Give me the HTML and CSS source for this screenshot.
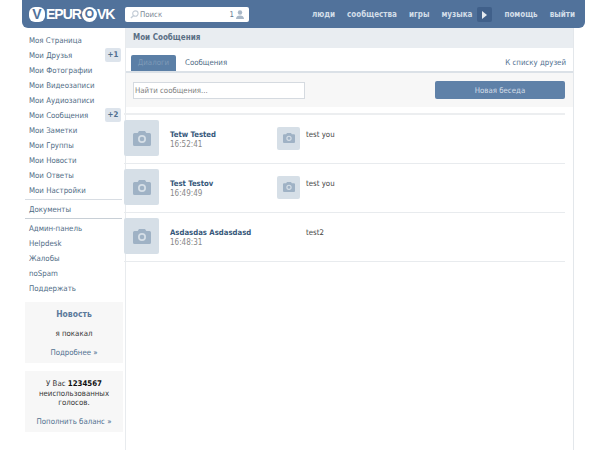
FILE: index.html
```html
<!DOCTYPE html>
<html lang="ru">
<head>
    <meta charset="UTF-8">
    <meta name="viewport" content="width=device-width, initial-scale=1.0">
    <title>Мои Сообщения</title>
    <link rel="stylesheet" href="styles.css">
</head>
<body>
    <svg class="sprites" width="0" height="0">
        <symbol id="camera" viewBox="0 0 18 15">
            <path fill-rule="evenodd" d="M6 0h6l1.3 2H16.500a1.500 1.500 0 0 1 1.500 1.500v10a1.500 1.500 0 0 1-1.500 1.500h-15a1.500 1.500 0 0 1-1.500-1.500v-10a1.500 1.500 0 0 1 1.500-1.500H4.700zM9 4a4 4 0 1 0 0 8 4 4 0 0 0 0-8zM9 5.700a2.300 2.300 0 1 1 0 4.600 2.300 2.300 0 0 1 0-4.600z"/>
        </symbol>
    </svg>

    <header class="topbar">
        <div class="logo"><span class="logo-ring">V</span>EPUR<span class="logo-ring logo-ring-o">O</span>VK</div>
        <div class="search">
            <svg class="search-icon" viewBox="0 0 10 10" width="9" height="9"><circle cx="6" cy="4" r="3" fill="none" stroke="#c3ccd6" stroke-width="1.200"/><path d="M4 6 1 9" stroke="#c3ccd6" stroke-width="1.500"/></svg>
            <span class="search-text">Поиск</span>
            <span class="search-count">1</span>
            <svg class="search-user" viewBox="0 0 9 10" width="8" height="9"><circle cx="4.500" cy="2.800" r="2.500" fill="#a9b8c8"/><path d="M0 10c0-3 2-4 4.500-4s4.500 1 4.500 4z" fill="#a9b8c8"/></svg>
        </div>
        <nav class="topnav">
            <a>люди</a>
            <a>сообщества</a>
            <a>игры</a>
            <a>музыка</a>
            <span class="play"><i></i></span>
            <a>помощь</a>
            <a>выйти</a>
        </nav>
    </header>

    <div class="layout">
        <aside class="sidebar">
            <ul class="menu">
                <li>Моя Страница</li>
                <li>Мои Друзья <b class="badge">+1</b></li>
                <li>Мои Фотографии</li>
                <li>Мои Видеозаписи</li>
                <li>Мои Аудиозаписи</li>
                <li>Мои Сообщения <b class="badge">+2</b></li>
                <li>Мои Заметки</li>
                <li>Мои Группы</li>
                <li>Мои Новости</li>
                <li>Мои Ответы</li>
                <li>Мои Настройки</li>
            </ul>
            <ul class="menu menu-docs">
                <li>Документы</li>
            </ul>
            <ul class="menu menu-admin">
                <li>Админ-панель</li>
                <li>Helpdesk</li>
                <li>Жалобы</li>
                <li>noSpam</li>
                <li>Поддержать</li>
            </ul>
            <div class="promo promo-news">
                <div class="promo-title">Новость</div>
                <p>я покакал</p>
                <a>Подробнее »</a>
            </div>
            <div class="promo promo-votes">
                <p>У Вас <b>1234567</b><br>неиспользованных<br>голосов.</p>
                <a>Пополнить баланс »</a>
            </div>
        </aside>

        <main class="content">
            <h1 class="page-title">Мои Сообщения</h1>
            <div class="tabs">
                <span class="tab active">Диалоги</span>
                <span class="tab">Сообщения</span>
                <a class="tabs-link">К списку друзей</a>
            </div>
            <div class="toolbar">
                <input class="find" type="text" placeholder="Найти сообщения...">
                <button class="btn">Новая беседа</button>
            </div>
            <div class="dialogs">
                <div class="dialog">
                    <div class="thumb"><svg class="cam"><use href="#camera"/></svg></div>
                    <div class="who"><div class="name">Tetw Tested</div><div class="time">16:52:41</div></div>
                    <div class="thumb-small"><svg class="cam-small"><use href="#camera"/></svg></div>
                    <div class="text">test you</div>
                </div>
                <div class="dialog">
                    <div class="thumb"><svg class="cam"><use href="#camera"/></svg></div>
                    <div class="who"><div class="name">Test Testov</div><div class="time">16:49:49</div></div>
                    <div class="thumb-small"><svg class="cam-small"><use href="#camera"/></svg></div>
                    <div class="text">test you</div>
                </div>
                <div class="dialog">
                    <div class="thumb"><svg class="cam"><use href="#camera"/></svg></div>
                    <div class="who"><div class="name">Asdasdas Asdasdasd</div><div class="time">16:48:31</div></div>
                    <div class="thumb-small none"></div>
                    <div class="text">test2</div>
                </div>
            </div>
        </main>
    </div>
</body>
</html>
```

FILE: styles.css
```css
body {
    margin: 0;
    background-color: #ffffff;
    font-family: "DejaVu Sans Condensed", "DejaVu Sans", sans-serif;
    font-size: 7.800px;
    color: #333;
    height: 450px;
    overflow: hidden;
}

.sprites {
    display: block;
    height: 0;
}

a {
    color: #4f6f8f;
}

/* top bar */
.topbar {
    margin: 0 19px 0 22px;
    height: 28px;
    display: flex;
    align-items: center;
    background-color: #51729b;
    border-radius: 0 0 6px 6px;
}

.logo {
    width: 103px;
    padding-left: 7px;
    box-sizing: border-box;
    display: flex;
    align-items: center;
    font-family: "Liberation Sans", sans-serif;
    font-weight: bold;
    font-size: 14px;
    letter-spacing: -1px;
    color: #ffffff;
    white-space: nowrap;
}

.logo-ring {
    width: 16px;
    height: 15px;
    line-height: 15px;
    text-align: center;
    border-radius: 6px;
    background-color: #ffffff;
    color: #51729b;
    font-size: 14px;
    letter-spacing: 0;
    margin-right: 1px;
}

.logo-ring-o {
    margin-left: 1px;
    margin-right: 0;
    width: 15px;
    border-radius: 8px;
    font-size: 12px;
}

.search {
    width: 124px;
    height: 15px;
    margin-top: 1px;
    display: flex;
    align-items: center;
    background-color: #ffffff;
    border-radius: 2px;
    color: #7a8794;
}

.search-icon {
    margin-left: 5px;
}

.search-text {
    margin-left: 1px;
    flex: 1;
}

.search-count {
    margin-right: 2px;
    color: #5f7890;
}

.search-user {
    margin-right: 5px;
}

.topnav {
    margin-left: auto;
    padding-right: 10px;
    display: flex;
    align-items: center;
    gap: 12px;
    margin-top: 1px;
}

.topnav a {
    color: #d3dee9;
    font-weight: bold;
    font-size: 8px;
}

.play {
    width: 15px;
    height: 15px;
    margin: 0 0 0 -7px;
    display: flex;
    align-items: center;
    justify-content: center;
    background-color: #40608a;
    border-radius: 2px;
}

.play i {
    border-left: 5px solid #e4eaf0;
    border-top: 4px solid transparent;
    border-bottom: 4px solid transparent;
}

/* page columns */
.layout {
    display: flex;
    margin-left: 25px;
    width: 549px;
    height: 422px;
}

.sidebar {
    width: 99px;
    flex-shrink: 0;
}

.menu {
    list-style: none;
    margin: 0;
    padding: 5px 0 0;
}

.menu li {
    position: relative;
    height: 15px;
    line-height: 15px;
    padding-left: 4px;
    color: #4f6b85;
    white-space: nowrap;
}

.menu-docs {
    margin: 1px 2px 0 0;
    padding: 2px 0 1px;
    border-top: 1px solid #d8dde3;
    border-bottom: 1px solid #c8cfd6;
}

.menu-admin {
    padding-top: 2px;
}

.badge {
    position: absolute;
    right: 3px;
    top: 0;
    width: 16px;
    height: 14px;
    line-height: 14px;
    text-align: center;
    border-radius: 2px;
    background-color: #dde4ec;
    color: #4d6d8c;
}

.promo {
    width: 98px;
    height: 61px;
    padding-top: 6px;
    background-color: #f7f7f7;
    text-align: center;
    box-sizing: border-box;
}

.promo p {
    margin: 0;
    color: #333;
}

.promo a {
    display: block;
}

.promo-news {
    margin-top: 6px;
}

.promo-title {
    font-weight: bold;
    font-size: 8.500px;
    line-height: 12px;
    color: #5b7a9b;
    margin-bottom: 9px;
}

.promo-news p {
    line-height: 10px;
}

.promo-news a {
    margin-top: 9px;
    line-height: 10px;
}

.promo-votes {
    margin-top: 8px;
    padding-top: 8px;
    line-height: 9.500px;
}

.promo-votes b {
    color: #111;
}

.promo-votes a {
    margin-top: 9px;
}

/* messages column */
.content {
    width: 449px;
    margin-left: 1px;
    box-sizing: border-box;
    border-left: 1px solid #e8ebee;
    border-right: 1px solid #e3e7eb;
}

.page-title {
    margin: 0;
    height: 20px;
    line-height: 19px;
    padding-left: 7px;
    font-size: 8px;
    font-weight: bold;
    color: #5a6f84;
    background-color: #e9edf1;
}

.tabs {
    margin-top: 7px;
    height: 16px;
    display: flex;
    align-items: flex-end;
    padding: 0 7px 0 5px;
    border-bottom: 2px solid #dbe1e7;
}

.tab {
    height: 16px;
    line-height: 16px;
    padding: 0 7px;
    color: #4f6b85;
}

.tab.active {
    width: 45px;
    box-sizing: border-box;
    text-align: center;
    padding: 0;
    background-color: #5b7fa6;
    color: #7f9bb8;
    border-radius: 2px 2px 0 0;
    margin-right: 2px;
}

.tabs-link {
    margin-left: auto;
    line-height: 16px;
}

.toolbar {
    height: 34px;
    display: flex;
    align-items: center;
    justify-content: space-between;
    padding: 0 8px 0 7px;
    background-color: #f7f7f7;
}

.find {
    width: 172px;
    height: 17px;
    box-sizing: border-box;
    margin: 0;
    padding: 0 1px;
    border: 1px solid #d5dae0;
    background-color: #fff;
    font-family: "DejaVu Sans Condensed", "DejaVu Sans", sans-serif;
    font-size: 7.800px;
}

.find::placeholder {
    color: #7d7d7d;
}

.btn {
    width: 130px;
    height: 18px;
    padding: 0;
    border: none;
    border-radius: 2px;
    background-color: #5f81a8;
    color: #d5dfe9;
    font-family: "DejaVu Sans Condensed", "DejaVu Sans", sans-serif;
    font-size: 7.800px;
}

.dialogs {
    margin: 6px 8px 0 -2px;
    border-top: 2px solid #eceef0;
}

.dialog {
    height: 46px;
    padding-bottom: 2px;
    display: flex;
    align-items: center;
    border-bottom: 1px solid #e8ebee;
}

.thumb {
    width: 35px;
    height: 36px;
    flex-shrink: 0;
    display: flex;
    align-items: center;
    justify-content: center;
    background-color: #d6dfe7;
    border-radius: 2px;
}

.cam {
    width: 18px;
    height: 15px;
    fill: #9fb2c5;
}

.who {
    width: 107px;
    margin-left: 11px;
    padding-top: 3px;
    flex-shrink: 0;
}

.name {
    font-weight: bold;
    font-size: 7.700px;
    line-height: 10px;
    color: #36587a;
}

.time {
    font-size: 8px;
    line-height: 10px;
    color: #888;
}

.thumb-small {
    width: 23px;
    height: 23px;
    flex-shrink: 0;
    display: flex;
    align-items: center;
    justify-content: center;
    background-color: #d6dfe7;
    border-radius: 2px;
}

.thumb-small.none {
    background-color: transparent;
}

.cam-small {
    width: 12px;
    height: 10px;
    fill: #9fb2c5;
}

.text {
    margin-left: 6px;
    margin-bottom: 8px;
    color: #444;
}
```
